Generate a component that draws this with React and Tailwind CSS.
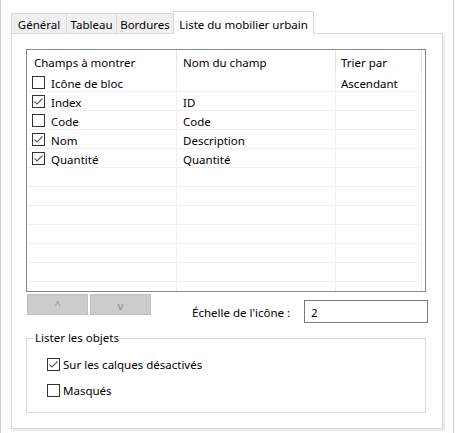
import React from "react";

function Box({ checked }) {
  return (
    <span className="w-[13px] h-[13px] border border-[#333333] bg-white flex items-center justify-center shrink-0">
      {checked && (
        <svg width="11" height="11" viewBox="0 0 11 11">
          <path d="M1.5 5.5 L4 8 L9.5 2.5" stroke="#5a5a5a" strokeWidth="1.1" fill="none" />
        </svg>
      )}
    </span>
  );
}

const rows = [
  { c: false, a: "Icône de bloc", b: "", s: "Ascendant" },
  { c: true, a: "Index", b: "ID", s: "" },
  { c: false, a: "Code", b: "Code", s: "" },
  { c: true, a: "Nom", b: "Description", s: "" },
  { c: true, a: "Quantité", b: "Quantité", s: "" },
  null, null, null, null, null, null, null,
];

export default function App() {
  return (
    <div className="w-[456px] h-[433px] bg-white flex font-['Noto_Sans',sans-serif] text-[11.5px] text-black leading-none">
      <div className="w-px h-full bg-[#c9cfe3]" />
      <div className="w-[452px] pl-[10px] pt-[11px] flex flex-col">
        {/* tabs */}
        <div className="flex items-end h-[22px]">
          <div className="w-[55px] h-[20px] pt-[3px] bg-[#f0f0f0] border-l border-t border-[#d9d9d9] flex items-center justify-center">Général</div>
          <div className="w-[50px] h-[20px] pt-[3px] bg-[#f0f0f0] border-l border-t border-[#d9d9d9] flex items-center justify-center">Tableau</div>
          <div className="w-[57px] h-[20px] pt-[3px] bg-[#f0f0f0] border-l border-t border-[#d9d9d9] flex items-center justify-center">Bordures</div>
          <div className="w-[141px] h-[23px] -mb-px bg-white border-l border-t border-r border-[#d9d9d9] flex items-start pt-[7px] justify-center relative z-10">Liste du mobilier urbain</div>
        </div>
        {/* panel */}
        <div className="w-[432px] h-[396px] border border-[#d9d9d9] bg-white shadow-[2px_2px_0_#ececec] pl-[14px] pt-[15px] flex flex-col">
          {/* table */}
          <div className="w-[400px] h-[243px] border border-[#828790] overflow-hidden flex flex-col">
            <div className="h-[23px] shrink-0 flex">
              <div className="w-[150px] border-r border-[#e5e5e5] pl-[7px] pt-[2px] flex items-center">Champs à montrer</div>
              <div className="w-[159px] border-r border-[#e5e5e5] pl-[6px] pt-[2px] flex items-center">Nom du champ</div>
              <div className="w-[86px] border-r border-[#e5e5e5] pl-[5px] pt-[2px] flex items-center">Trier par</div>
            </div>
            {rows.map((r, i) => (
              <div key={i} className="h-[19px] shrink-0 flex">
                <div className="w-[150px] border-r border-b border-[#f0f0f0] pl-[5px] flex items-center gap-[6px]">
                  {r && <Box checked={r.c} />}
                  {r && <span className="pt-[4px]">{r.a}</span>}
                </div>
                <div className="w-[159px] border-r border-b border-[#f0f0f0] pl-[6px] pt-[4px] flex items-center">{r ? r.b : ""}</div>
                <div className="w-[86px] border-r border-b border-[#f0f0f0] pl-[5px] pt-[4px] flex items-center">{r ? r.s : ""}</div>
              </div>
            ))}
          </div>
          {/* buttons + scale */}
          <div className="flex items-start mt-[2px]">
            <div className="ml-px w-[61px] h-[21px] bg-[#cccccc] border border-[#bfbfbf] text-[#8a8a8a] text-[10px] flex items-center justify-center">^</div>
            <div className="ml-[2px] w-[61px] h-[21px] bg-[#cccccc] border border-[#bfbfbf] text-[#8a8a8a] text-[11px] flex items-center justify-center pt-[2px]">v</div>
            <div className="ml-[41px] w-[112px] h-[23px] mt-[6px] pt-[2px] flex items-center">Échelle de l'icône :</div>
            <div className="w-[124px] h-[23px] mt-[6px] border border-[#7a7a7a] pl-[6px] pt-[2px] flex items-center">2</div>
          </div>
          {/* group box */}
          <fieldset className="mt-[7px] w-[400px] h-[83px] border border-[#dcdcdc] pl-[20px]">
            <legend className="ml-[-13px] px-[1px] leading-[16px]">Lister les objets</legend>
            <div className="flex items-center gap-[3px] mt-[12px] h-[13px]">
              <Box checked />
              <span className="pt-[1px]">Sur les calques désactivés</span>
            </div>
            <div className="flex items-center gap-[3px] mt-[13px] h-[13px]">
              <Box checked={false} />
              <span className="pt-[1px]">Masqués</span>
            </div>
          </fieldset>
        </div>
      </div>
      <div className="w-px h-full bg-[#c8ccd3]" />
    </div>
  );
}
